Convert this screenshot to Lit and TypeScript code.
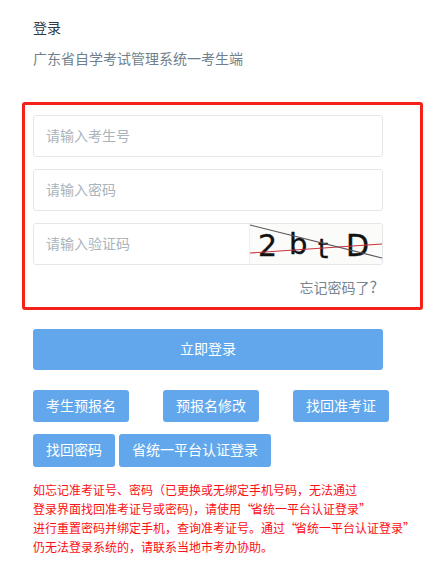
import { LitElement, html, css } from "lit";
import { customElement } from "lit/decorators.js";

@customElement("app-root")
export class AppRoot extends LitElement {
  static styles = css`
    :host {
      display: block;
      width: 445px;
      height: 579px;
      overflow: hidden;
      background: #fff;
      box-sizing: border-box;
      padding: 17px 0 0 22px;
      font-family: "Noto Sans CJK SC", "Noto Sans", sans-serif;
      font-size: 14px;
    }
    .head { padding-left: 11px; }
    .title { color: #303a42; line-height: 20px; }
    .sub { color: #6f7f8c; line-height: 20px; margin-top: 11px; }
    .box {
      width: 401px;
      height: 208px;
      box-sizing: border-box;
      margin-top: 34px;
      border: 3px solid #f5221b;
      border-radius: 3px;
      padding: 10px 0 0 8px;
      display: flex;
      flex-direction: column;
      gap: 12px;
    }
    .field {
      width: 350px;
      height: 42px;
      box-sizing: border-box;
      border: 1px solid #e4e8eb;
      border-radius: 3px;
      padding-left: 12px;
      color: #a9b4bc;
      line-height: 38px;
      display: flex;
      justify-content: space-between;
      overflow: hidden;
    }
    .captcha { width: 132px; height: 40px; display: block; border-left: 1px solid #eceff1; }
    .captcha text {
      font-family: "DejaVu Sans", sans-serif;
      fill: #111;
      stroke: #111;
      stroke-width: 0.4px;
    }
    .forgot { color: #76858f; text-align: right; width: 344px; line-height: 20px; margin-top: -1px; }
    .forgot span { font-size: 16px; }
    .main {
      margin: 19px 0 0 11px;
      width: 350px;
      height: 41px;
      background: #62a7ec;
      border-radius: 3px;
      color: #fff;
      text-align: center;
      line-height: 39px;
    }
    .row { display: flex; margin: 20px 0 0 11px; gap: 34px; }
    .row.second { margin-top: 12px; gap: 4px; }
    .btn {
      background: #62a7ec;
      color: #fff;
      border-radius: 3px;
      padding: 0 13px;
      height: 32px;
      line-height: 30px;
    }
    .second .btn { height: 33px; line-height: 31px; }
    .note {
      margin: 13px 0 0 11px;
      color: #fb0f16;
      font-size: 12px;
      line-height: 19px;
      white-space: nowrap;
    }
    .q { letter-spacing: -2px; }
  `;

  render() {
    return html`
      <div class="head">
        <div class="title">登录</div>
        <div class="sub">广东省自学考试管理系统一考生端</div>
      </div>
      <div class="box">
        <div class="field">请输入考生号</div>
        <div class="field">请输入密码</div>
        <div class="field">
          <span>请输入验证码</span>
          <svg class="captcha" viewBox="0 0 132 40">
            <rect width="132" height="40" fill="#fbfbf9"></rect>
            <text x="8" y="32" font-size="30">2</text>
            <text x="39" y="30" font-size="29">b</text>
            <text x="68" y="34" font-size="26">t</text>
            <text x="96" y="32" font-size="30">D</text>
            <path d="M0 29 L132 20" stroke="#c8343c" stroke-width="1.2" fill="none"></path>
            <path d="M0 1 L132 34" stroke="#5a5258" stroke-width="1.2" fill="none"></path>
          </svg>
        </div>
        <div class="forgot">忘记密码了<span>?</span></div>
      </div>
      <div class="main">立即登录</div>
      <div class="row">
        <div class="btn">考生预报名</div>
        <div class="btn">预报名修改</div>
        <div class="btn">找回准考证</div>
      </div>
      <div class="row second">
        <div class="btn">找回密码</div>
        <div class="btn">省统一平台认证登录</div>
      </div>
      <div class="note">
        如忘记准考证号、密码（已更换或无绑定手机号码，无法通过<br />
        登录界面找回准考证号或密码)，请使用<span class="q">“</span>省统一平台认证登录”<br />
        进行重置密码并绑定手机，查询准考证号。通过<span class="q">“</span>省统一平台认证登录”<br />
        仍无法登录系统的，请联系当地市考办协助。
      </div>
    `;
  }
}
